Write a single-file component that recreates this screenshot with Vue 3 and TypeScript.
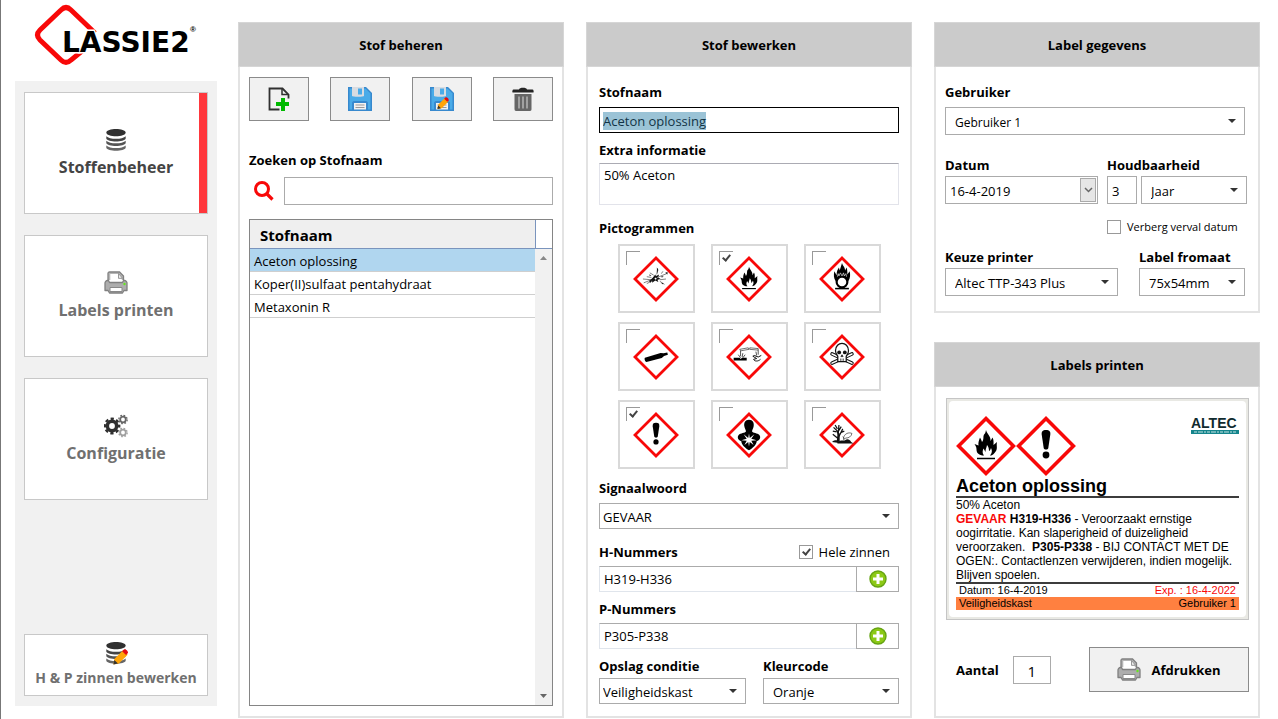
<script setup lang="ts">
import { onMounted, ref } from 'vue'

interface NavItem {
  id: string
  label: string
  icon: string
}

interface Pictogram {
  id: string
  label: string
  checked: boolean
}

const navItems: NavItem[] = [
  { id: 'stoffen', label: 'Stoffenbeheer', icon: 'i-database' },
  { id: 'labels', label: 'Labels printen', icon: 'i-printer' },
  { id: 'config', label: 'Configuratie', icon: 'i-gears' },
]
const activeNav = ref('stoffen')

const tools = [
  { label: 'Nieuwe stof', icon: 'i-new' },
  { label: 'Opslaan', icon: 'i-save' },
  { label: 'Opslaan als', icon: 'i-save-edit' },
  { label: 'Verwijderen', icon: 'i-trash' },
]

const search = ref('')
const substances = ['Aceton oplossing', 'Koper(II)sulfaat pentahydraat', 'Metaxonin R']
const selected = ref(0)

const name = ref('Aceton oplossing')
const info = ref('50% Aceton')
const hNumbers = ref('H319-H336')
const pNumbers = ref('P305-P338')
const fullSentences = ref(true)
const pictograms = ref<Pictogram[]>([
  { id: 'p-explosive', label: 'Explosief', checked: false },
  { id: 'p-flame', label: 'Ontvlambaar', checked: true },
  { id: 'p-oxidizer', label: 'Oxiderend', checked: false },
  { id: 'p-gas', label: 'Gas onder druk', checked: false },
  { id: 'p-corrosive', label: 'Corrosief', checked: false },
  { id: 'p-toxic', label: 'Giftig', checked: false },
  { id: 'p-harmful', label: 'Schadelijk', checked: true },
  { id: 'p-health', label: 'Gezondheidsgevaar', checked: false },
  { id: 'p-environment', label: 'Milieugevaarlijk', checked: false },
])

const date = ref('16-4-2019')
const shelfLife = ref('3')
const hideExpiry = ref(false)
const amount = ref('1')

const nameInput = ref<HTMLInputElement | null>(null)
onMounted(() => {
  nameInput.value?.focus()
  nameInput.value?.select()
})
</script>

<template>
  <div class="page">
    <svg class="defs" aria-hidden="true">
      <defs>
        <symbol id="i-database" viewBox="0 0 24 24">
          <path d="M2.3 17.5v2.2c1 4 18.4 4 19.4 0v-2.2c-3 3.4-16.4 3.4-19.4 0z" fill="#666" />
          <path d="M2.3 12.8V15c1 4 18.4 4 19.4 0v-2.2c-3 3.4-16.4 3.4-19.4 0z" fill="#555" />
          <path d="M2.3 8.2v2.2c1 4 18.4 4 19.4 0V8.2c-3 3.4-16.4 3.4-19.4 0z" fill="#444" />
          <path d="M2.3 4.5C2.5-.2 21.5-.2 21.7 4.5 22 9.6 2 9.6 2.3 4.5z" fill="#303030" />
        </symbol>
        <symbol id="i-pencil" viewBox="0 0 24 24">
          <path d="M7 24l1-6 9.5-9.5 5 4.8L13 23z" fill="#ffa408" />
          <path d="M7 24l1-5 4 4z" fill="#333" />
          <path d="M16.5 9.5l2-2c1.5-1 5 2 4.3 4l-2 2.2z" fill="#e30b13" />
        </symbol>
        <symbol id="i-printer" viewBox="0 0 24 24">
          <path d="M4 9V2.5C4 1.5 4.5 1 5.5 1h10l4 4v4" fill="#b5b5b5" stroke="#808080" stroke-width="1.3" />
          <path d="M6.3 12V3h8v4.500h3.500V12z" fill="#fff" />
          <path d="M14.5 2.5v4.800h4z" fill="#eee" stroke="#888" stroke-width=".8" />
          <path d="M1 12c0-1 1-2.5 2.5-2.5h1l1 2h13l1-2h1c1.5 0 2.5 1.5 2.5 2.5v7.5h-3l-1.500 2.5h-13L4 19.500H1z" fill="#adadad" stroke="#808080" stroke-width="1.3" stroke-linejoin="round" />
          <path d="M6 16.500h12v4H6z" fill="#fff" stroke="#888" />
          <circle cx="20.5" cy="13" r="1.2" fill="#65e51d" />
        </symbol>
        <symbol id="i-gears" viewBox="0 0 24 24">
          <circle cx="8" cy="12" r="4.7" fill="none" stroke="#303030" stroke-width="3.6" />
          <circle cx="8" cy="12" r="7.2" fill="none" stroke="#303030" stroke-width="2.4" stroke-dasharray="3.2 2.455" stroke-dashoffset="1.6" />
          <circle cx="19" cy="5.5" r="2.8" fill="none" stroke="#666" stroke-width="1.8" />
          <circle cx="19" cy="5.5" r="4.2" fill="none" stroke="#666" stroke-width="1.3" stroke-dasharray="1.7 1.6" />
          <circle cx="19" cy="18.5" r="2.8" fill="none" stroke="#a0a0a0" stroke-width="1.8" />
          <circle cx="19" cy="18.5" r="4.2" fill="none" stroke="#a0a0a0" stroke-width="1.3" stroke-dasharray="1.7 1.6" />
        </symbol>
        <symbol id="i-new" viewBox="0 0 24 24">
          <path d="M12.5 22.5h-10V1.5h13l6 6v4" fill="none" stroke="#303030" stroke-width="1.8" />
          <path d="M15 1.5v6h6" fill="none" stroke="#303030" stroke-width="1.5" />
          <path d="M14 11h4v4h4v4h-4v5h-4v-5H9v-4h5z" fill="#00b900" />
        </symbol>
        <symbol id="i-save" viewBox="0 0 24 24">
          <path d="M0 0h18l6 6v18H0z" fill="#3789ce" />
          <path d="M1.5 1.5h16l5 5v16h-21z" fill="#4aabe8" />
          <path d="M4 0h12v9c0 1-12 1-12 0z" fill="#d9dce1" />
          <path d="M10 1.5h4v6h-4z" fill="#4aabe8" />
          <path d="M4 24v-8c0-1 1-2 2-2h12c1 0 2 1 2 2v8z" fill="#3789ce" />
          <path d="M6 16h12v6.500H6z" fill="#f2f2f2" />
          <path d="M7.5 18h9M7.5 20.5h9" stroke="#999" />
        </symbol>
        <symbol id="i-save-edit" viewBox="0 0 24 24">
          <use href="#i-save" width="24" height="24" />
          <use href="#i-pencil" x="2" y="5" width="18" height="17" />
        </symbol>
        <symbol id="i-trash" viewBox="0 0 24 24">
          <path d="M8 2.500C8 0 16 0 16 2.500h5.500c1 0 1.500 2 1 3h-21c-.5-1 0-3 1-3z" fill="#252525" />
          <path d="M3.500 7h17v15c0 1-.5 2-1.500 2H5c-1 0-1.500-1-1.500-2z" fill="#666" />
          <path d="M8 9.500v12M12 9.500v12M16 9.500v12" stroke="#b5b5b5" stroke-width="1.5" />
        </symbol>
        <symbol id="i-add" viewBox="0 0 18 18">
          <circle cx="9" cy="9" r="8" fill="#8cc915" stroke="#65a313" stroke-width="1.4" />
          <path d="M7.500 4h3v3.500H14v3h-3.500V14h-3v-3.500H4v-3h3.500z" fill="#fff" />
        </symbol>

        <symbol id="p-frame" viewBox="0 0 60 60">
          <path d="M30 2.600L57.400 30 30 57.400 2.600 30z" fill="#fff" stroke="#f80808" stroke-width="3.6" />
        </symbol>
        <symbol id="p-explosive" viewBox="0 0 60 60">
          <g fill="none" stroke="#333" stroke-width=".8">
            <path d="M14 35l10-4M18 36l8-4M13 30l11 1M34 27l10-4M35 31l8-1M35 33l6 4M31 24l1-8M27 25l-5-3M24 28l-6-1M37 23l2-3" />
          </g>
          <path d="M26 28l3-4 1 2 4-2-1 4 3 2-4 1 1 3-4-2-4 3v-3l-4 1 3-3z" fill="#111" />
          <path d="M31 15l2 3-1 5zM42 22l3-1v3zM37 35l3 1-2 1zM21 24l3 1-2 1zM36 27l4-1-2 2zM21 33l4-2-2 4z" fill="#111" />
          <path d="M28 29l2-1 1 2-2 1zM32 27l1 1-1 1z" fill="#fff" />
        </symbol>
        <symbol id="p-flame" viewBox="0 0 60 60">
          <path d="M30 14C31 18 35 20 34.500 25L36.500 21.500C38 24 37.500 27 37.500 29L41 26C40 30 42.500 33 38.500 37 37 39 35.500 39.500 34 39.500 36 37 36.500 35 35 32 34.500 34 33.500 35 33 35 33 32 32 30 31 29 30.500 32 29.500 33 29.500 36L27.500 32.500C26.500 35 26 37 28 39.500 23 39.500 20.500 37 20.500 33.500 20.500 31 19.500 30 18.500 28L22.500 29.500C22 27 23 24 24 21.500 25 23 25.500 24.500 26 26 28.500 23 26.500 20 28.500 18 29.500 17 29.700 15.500 30 14z" fill="#000" />
          <path d="M21 42.500h18" stroke="#000" stroke-width="1.5" />
        </symbol>
        <symbol id="p-oxidizer" viewBox="0 0 60 60">
          <path d="M22 33c-3-4-3-8-2-13l3 5c0-5 1-7 3-10l1 4 3-10c1 4 4 5 4 10l2-4c1 3 1 6 1 9l3-4c1 5 1 9-2 13z" fill="#000" />
          <circle cx="30" cy="34" r="7" fill="#fff" stroke="#000" stroke-width="2.8" />
          <path d="M24 27l1-4 1 3 2-4 2 4 2-4 1 4 2-3 1 4" fill="none" stroke="#fff" stroke-width=".8" />
          <path d="M21 42.500h18" stroke="#000" stroke-width="2" />
        </symbol>
        <symbol id="p-gas" viewBox="0 0 60 60">
          <path d="M15.500 31c-1 1 0 5 2 5.500l20-5.300 3-2.500 5-1.500-.8-3-4.700 1-4-.5z" fill="#000" />
        </symbol>
        <symbol id="p-corrosive" viewBox="0 0 60 60">
          <path d="M18 20l11-2 1 2-11 2zM31 18l11 1v2l-11-1z" fill="#fff" stroke="#333" stroke-width=".9" />
          <path d="M19 22v7M22 25l-1 5M42 21v6M39 23l1 5M16 27l3 4M25 27l-3 4" fill="none" stroke="#222" stroke-width="1" />
          <path d="M10 31h8l1 1.500 2-1.500h6v3.500H10z" fill="#000" />
          <path d="M46 28l-4 2-5-2-2 1 5 3-4 1c1 3 6 3 9 0" fill="none" stroke="#111" stroke-width="1.3" />
        </symbol>
        <symbol id="p-toxic" viewBox="0 0 60 60">
          <path d="M17 26l26 12M43 26L17 38" stroke="#111" stroke-width="4.600" stroke-linecap="round" />
          <path d="M17 26l26 12M43 26L17 38" stroke="#fff" stroke-width="2" stroke-linecap="round" />
          <path d="M21.500 22c0-13 17-13 17 0 0 4-1 5-3 7v7h-11v-7c-2-2-3-3-3-7z" fill="#fff" stroke="#111" stroke-width="1.6" />
          <ellipse cx="26.3" cy="24" rx="2.5" ry="2.4" fill="#111" />
          <ellipse cx="33.7" cy="24" rx="2.5" ry="2.4" fill="#111" />
          <path d="M30 27l1.500 2.500h-3zM28 32v3M30 32v3M32 32v3" fill="#111" stroke="#111" stroke-width=".8" />
        </symbol>
        <symbol id="p-harmful" viewBox="0 0 60 60">
          <path d="M30 14c3.500 0 4.600 1.500 4.300 4.500l-2 13.500c-.5 2-4.100 2-4.600 0l-2-13.500C25.400 15.500 26.500 14 30 14z" fill="#000" />
          <circle cx="30" cy="39" r="3.4" fill="#000" />
        </symbol>
        <symbol id="p-health" viewBox="0 0 60 60">
          <path d="M30 10c5 0 7 4 6 9-.5 3-2 4-2 6.500 1 2 7 2 9.500 4.500C46 33 44 37 40 38c0 4-5 9-10 12-5-3-10-8-10-12-4-1-6-5-3.500-8 2.500-2.500 8.500-2.500 9.500-4.500 0-2.500-1.500-3.500-2-6.500-1-5 1-9 6-9z" fill="#000" />
          <path d="M30 28l1 6 6-5-4 6 7 2-7 .5 3 5.500-5-4-1 6-1-6-5 4 3-5.500-7-.5 7-2-4-6 6 5z" fill="#fff" />
        </symbol>
        <symbol id="p-environment" viewBox="0 0 60 60">
          <path d="M24 39l1-8-1-6-5-5M25 30l1-13M26 32l5-10M23 26l-5-1M28 27l5-2M24 22l-3-5M26 24l3-5M24 34l-6-5" fill="none" stroke="#111" stroke-width="1.6" />
          <path d="M25 27l2 1v10h-4z" fill="#111" />
          <path d="M17 39c4-3 7-2 9-1 3-2 5 0 8-1 3-3 6-1 8 2l3 2H24v-1z" fill="#111" />
          <path d="M32 34c1-6 7-8 11-6-1 4-4 6-8 6l-3 2zM33 35l-2-3" fill="#fff" stroke="#333" stroke-width=".9" />
        </symbol>
      </defs>
    </svg>

    <aside class="sidebar">
      <svg class="logo" width="170" height="64" viewBox="0 0 170 64" role="img" aria-label="LASSIE2">
        <path d="M59 28L35 5Q30 0 25 5L4 25Q-1 30 4 35L25 55Q30 60 35 55L46 46" fill="none" stroke="#f80808" stroke-width="5" />
        <text x="26" y="47" class="logo-text">LASSIE2</text>
        <text x="154" y="27" class="logo-mark">®</text>
      </svg>
      <nav class="nav">
        <button
          v-for="item in navItems"
          :key="item.id"
          type="button"
          class="nav-item"
          :class="{ active: activeNav === item.id }"
          @click="activeNav = item.id"
        >
          <svg width="24" height="24"><use :href="'#' + item.icon" /></svg>
          <span>{{ item.label }}</span>
        </button>
        <button type="button" class="nav-item small">
          <svg width="26" height="24" viewBox="0 0 26 24">
            <use href="#i-database" x="1" width="24" height="24" />
            <use href="#i-pencil" x="4" y="1" width="22" height="23" />
          </svg>
          <span>H &amp; P zinnen bewerken</span>
        </button>
      </nav>
    </aside>

    <main class="panels">
      <section class="panel">
        <h2>Stof beheren</h2>
        <div class="body manage">
          <div class="tools">
            <button v-for="tool in tools" :key="tool.icon" type="button" class="tool" :aria-label="tool.label">
              <svg width="24" height="24"><use :href="'#' + tool.icon" /></svg>
            </button>
          </div>
          <label for="search" class="caption">Zoeken op Stofnaam</label>
          <div class="search">
            <svg width="20" height="20" viewBox="0 0 20 20" aria-hidden="true">
              <circle cx="8" cy="8" r="6.500" fill="none" stroke="#f80808" stroke-width="3" />
              <path d="M12.500 12.500l6 6" stroke="#f80808" stroke-width="3.2" />
            </svg>
            <input id="search" v-model="search" type="text" class="box tall" />
          </div>
          <div class="list">
            <table>
              <thead>
                <tr><th scope="col">Stofnaam</th></tr>
              </thead>
              <tbody>
                <tr v-for="(row, i) in substances" :key="row" :class="{ selected: selected === i }" @click="selected = i">
                  <td>{{ row }}</td>
                </tr>
              </tbody>
            </table>
            <div class="scroll" aria-hidden="true">
              <div class="scroll-head"></div>
              <div class="track">
                <svg width="7" height="4"><path d="M0 4l3.500-4L7 4z" fill="#888" /></svg>
                <svg width="7" height="4"><path d="M0 0l3.500 4L7 0z" fill="#666" /></svg>
              </div>
            </div>
          </div>
        </div>
      </section>

      <section class="panel">
        <h2>Stof bewerken</h2>
        <div class="body edit">
          <label for="name" class="caption">Stofnaam</label>
          <input id="name" ref="nameInput" v-model="name" type="text" class="box name" />
          <label for="info" class="caption gap-s">Extra informatie</label>
          <textarea id="info" v-model="info" class="box info"></textarea>
          <div class="caption gap-l">Pictogrammen</div>
          <div class="pictograms">
            <label v-for="p in pictograms" :key="p.id" class="pictogram">
              <input v-model="p.checked" type="checkbox" class="corner" :aria-label="p.label" />
              <svg width="46" height="46" viewBox="0 0 60 60" aria-hidden="true">
                <use href="#p-frame" />
                <use :href="'#' + p.id" />
              </svg>
            </label>
          </div>
          <label for="signal" class="caption">Signaalwoord</label>
          <div class="select">
            <select id="signal" class="box tight"><option>GEVAAR</option><option>WAARSCHUWING</option></select>
          </div>
          <div class="between gap-l">
            <label for="hnum" class="caption">H-Nummers</label>
            <label class="check"><input v-model="fullSentences" type="checkbox" />Hele zinnen</label>
          </div>
          <div class="adder">
            <input id="hnum" v-model="hNumbers" type="text" class="box soft" />
            <button type="button" aria-label="H-nummer toevoegen"><svg width="18" height="18"><use href="#i-add" /></svg></button>
          </div>
          <label for="pnum" class="caption gap-s">P-Nummers</label>
          <div class="adder">
            <input id="pnum" v-model="pNumbers" type="text" class="box soft" />
            <button type="button" aria-label="P-nummer toevoegen"><svg width="18" height="18"><use href="#i-add" /></svg></button>
          </div>
          <div class="storage gap-s">
            <div>
              <label for="storage" class="caption">Opslag conditie</label>
              <div class="select"><select id="storage" class="box tight"><option>Veiligheidskast</option></select></div>
            </div>
            <div>
              <label for="colour" class="caption">Kleurcode</label>
              <div class="select"><select id="colour" class="box"><option>Oranje</option></select></div>
            </div>
          </div>
        </div>
      </section>

      <div class="column">
        <section class="panel">
          <h2>Label gegevens</h2>
          <div class="body details">
            <label for="user" class="caption">Gebruiker</label>
            <div class="select"><select id="user" class="box tall user"><option>Gebruiker 1</option></select></div>
            <div class="dates">
              <div class="grow">
                <label for="date" class="caption">Datum</label>
                <div class="date box tall">
                  <input id="date" v-model="date" type="text" />
                  <button type="button" aria-label="Kalender openen">
                    <svg width="9" height="6" viewBox="0 0 9 6"><path d="M1 1l3.500 3.500L8 1" fill="none" stroke="#666" stroke-width="1.5" /></svg>
                  </button>
                </div>
              </div>
              <div class="shelf">
                <label for="shelf" class="caption">Houdbaarheid</label>
                <div class="shelf-row">
                  <input id="shelf" v-model="shelfLife" type="text" class="box tall count" />
                  <div class="select"><select class="box tall" aria-label="Eenheid"><option>Jaar</option><option>Maand</option></select></div>
                </div>
              </div>
            </div>
            <label class="check hide"><input v-model="hideExpiry" type="checkbox" />Verberg verval datum</label>
            <div class="printer">
              <div class="grow">
                <label for="printer" class="caption">Keuze printer</label>
                <div class="select"><select id="printer" class="box tall"><option>Altec TTP-343 Plus</option></select></div>
              </div>
              <div class="format">
                <label for="format" class="caption">Label fromaat</label>
                <div class="select"><select id="format" class="box tall"><option>75x54mm</option></select></div>
              </div>
            </div>
          </div>
        </section>

        <section class="panel fill">
          <h2>Labels printen</h2>
          <div class="body print">
            <div class="preview">
              <article class="sticker">
                <div class="sticker-top">
                  <div class="signs">
                    <svg width="60" height="60" viewBox="0 0 60 60"><use href="#p-frame" /><use href="#p-flame" /></svg>
                    <svg width="60" height="60" viewBox="0 0 60 60"><use href="#p-frame" /><use href="#p-harmful" /></svg>
                  </div>
                  <svg width="48" height="20" viewBox="0 0 48 20" role="img" aria-label="ALTEC">
                    <text x="0" y="12" class="altec">ALTEC</text>
                    <path d="M0 14h48v4H0z" fill="#15858c" />
                    <path d="M3 16h42" stroke="#c8e4e4" stroke-dasharray="3 1 5 1 2 1" />
                  </svg>
                </div>
                <h3>Aceton oplossing</h3>
                <p>
                  50% Aceton<br />
                  <b class="danger">GEVAAR</b> <b>H319-H336</b> - Veroorzaakt ernstige oogirritatie. Kan slaperigheid of
                  duizeligheid veroorzaken.&nbsp; <b>P305-P338</b> - BIJ CONTACT MET DE OGEN:. Contactlenzen
                  verwijderen, indien mogelijk. Blijven spoelen.
                </p>
                <div class="sticker-row"><span>Datum: 16-4-2019</span><span class="danger">Exp. : 16-4-2022</span></div>
                <div class="sticker-row orange"><span>Veiligheidskast</span><span>Gebruiker 1</span></div>
              </article>
            </div>
            <div class="print-row">
              <label for="amount" class="caption">Aantal</label>
              <input id="amount" v-model="amount" type="text" class="box tall amount" />
              <button type="button" class="print-button">
                <svg width="24" height="24"><use href="#i-printer" /></svg>
                Afdrukken
              </button>
            </div>
          </div>
        </section>
      </div>
    </main>
  </div>
</template>

<style>
body {
  margin: 0;
  background: #fff;
}
</style>

<style scoped>
* {
  box-sizing: border-box;
}
.page {
  display: flex;
  gap: 21px;
  min-height: 100vh;
  padding: 0 18px 0 14px;
  border-left: 1px solid #777;
  font-family: 'Open Sans', 'Noto Sans', sans-serif;
  font-size: 13px;
  color: #000;
}
.defs {
  position: absolute;
  width: 0;
  height: 0;
}
svg {
  display: block;
  flex: none;
}
button,
input,
select,
textarea {
  font: inherit;
  color: inherit;
  margin: 0;
  outline: none;
}
button {
  padding: 0;
  cursor: pointer;
}

/* Sidebar */
.sidebar {
  display: flex;
  flex-direction: column;
  flex: none;
  width: 202px;
  padding: 5px 0 13px;
}
.logo {
  margin: 0 0 12px 21px;
  overflow: visible;
}
.logo-text {
  font: bold 28px 'DejaVu Sans', sans-serif;
  stroke: #fff;
  stroke-width: 3px;
  paint-order: stroke;
}
.logo-mark {
  font: bold 8px 'Liberation Sans', sans-serif;
}
.nav {
  display: flex;
  flex-direction: column;
  flex: 1;
  gap: 21px;
  padding: 11px 9px 10px;
  background: #f1f1f1;
}
.nav-item {
  position: relative;
  display: flex;
  flex-direction: column;
  align-items: center;
  justify-content: center;
  gap: 3px;
  height: 122px;
  border: 1px solid #c8c8c8;
  background: #fff;
  color: #707070;
  font-size: 16px;
  font-weight: 700;
  line-height: 24px;
}
.nav-item.active {
  color: #444;
}
.nav-item.active::after {
  content: '';
  position: absolute;
  inset: 0 0 0 auto;
  width: 8px;
  background: #ff373c;
}
.nav-item.small {
  gap: 1px;
  height: 62px;
  margin-top: auto;
  font-size: 14px;
}

/* Panels */
.panels {
  display: grid;
  grid-template-columns: repeat(3, minmax(0, 1fr));
  gap: 22px;
  flex: 1;
  padding: 22px 0 1px;
}
.column {
  display: flex;
  flex-direction: column;
  gap: 29px;
}
.panel {
  display: flex;
  flex-direction: column;
  border: 2px solid #e3e3e3;
}
.fill {
  flex: 1;
}
h2 {
  margin: -2px -2px 0;
  padding-top: 2px;
  border: 1px solid #d6d6d6;
  background: #cbcbcb;
  font-size: 13px;
  font-weight: 700;
  line-height: 41px;
  text-align: center;
}
.body {
  display: flex;
  flex-direction: column;
  flex: 1;
}
.caption {
  display: block;
  font-weight: 700;
  line-height: 18px;
}
.box {
  width: 100%;
  height: 26px;
  padding: 2px 4px 0;
  border: 1px solid #ababab;
  border-radius: 0;
  background: #fff;
}
.tall {
  height: 28px;
}
.gap-s {
  margin-top: 8px;
}
.gap-l {
  margin-top: 14px;
}
.between {
  display: flex;
  justify-content: space-between;
  padding-right: 9px;
}
.select {
  position: relative;
  flex: 1;
}
.select select {
  appearance: none;
  display: block;
  padding: 2px 24px 0 9px;
}
.select select.tight {
  padding-left: 3px;
}
.select select.user {
  font-size: 12px;
}
.select::after {
  content: '';
  position: absolute;
  right: 9px;
  top: 50%;
  margin-top: -2px;
  border: 4px solid transparent;
  border-top-color: #333;
  border-bottom: 0;
  pointer-events: none;
}
.check {
  display: flex;
  align-items: center;
  gap: 6px;
  line-height: 18px;
}
input[type='checkbox'] {
  appearance: none;
  position: relative;
  flex: none;
  width: 14px;
  height: 14px;
  border: 1px solid #999;
  background: #fff;
}
input[type='checkbox']:checked::after {
  content: '';
  position: absolute;
  left: 4px;
  top: 1px;
  width: 3px;
  height: 6px;
  border: solid #444;
  border-width: 0 2px 2px 0;
  transform: rotate(40deg);
}

/* Substance list */
.manage {
  padding: 10px 9px;
}
.tools {
  display: flex;
  justify-content: space-between;
  margin-bottom: 30px;
}
.tool {
  display: flex;
  align-items: center;
  justify-content: center;
  width: 60px;
  height: 44px;
  border: 1px solid #8b8b8b;
  background: #f1f1f1;
}
.search {
  display: flex;
  align-items: center;
  gap: 10px;
  margin: 8px 0 14px;
  padding-left: 5px;
}
.list {
  display: flex;
  flex: 1;
  border: 1px solid #858585;
}
table {
  flex: 1;
  align-self: flex-start;
  border-collapse: separate;
  border-spacing: 0;
}
th {
  height: 29px;
  padding: 2px 10px 0;
  border-bottom: 1px solid #7a94bd;
  background: #efefef;
  font-size: 15px;
  line-height: 20px;
  text-align: left;
}
td {
  height: 23px;
  padding: 2px 4px 0;
  border-bottom: 1px solid #cfcfcf;
  line-height: 18px;
}
.selected td {
  background: #b0d6ef;
}
.scroll {
  display: flex;
  flex-direction: column;
  width: 17px;
}
.scroll-head {
  height: 29px;
  border: solid #7a94bd;
  border-width: 0 0 1px 1px;
}
.track {
  display: flex;
  flex-direction: column;
  align-items: center;
  justify-content: space-between;
  flex: 1;
  padding: 7px 0;
  background: #f1f1f1;
}

/* Substance editor */
.edit {
  padding: 16px 11px 12px;
}
.name {
  margin-top: 6px;
  padding: 2px 3px 0;
  border-color: #000;
}
.name::selection {
  background: #9bc3d6;
  color: #123446;
}
.info {
  height: 42px;
  margin-top: 4px;
  padding: 2px 4px;
  border-color: #ababb3 #e2e3ea #e2e3ea;
  line-height: 18px;
  resize: none;
}
.pictograms {
  display: grid;
  grid-template-columns: repeat(3, 77px);
  justify-content: center;
  gap: 9px 16px;
  margin: 7px 0 10px;
}
.pictogram {
  position: relative;
  display: flex;
  align-items: center;
  justify-content: center;
  height: 69px;
  border: 2px solid #d9d9d9;
}
.pictogram input.corner {
  position: absolute;
  left: 6px;
  top: 5px;
  border-width: 1px 0 0 1px;
}
.edit > .select {
  flex: none;
  margin-top: 6px;
}
.adder {
  display: flex;
  margin-top: 5px;
}
.adder button {
  display: flex;
  align-items: center;
  justify-content: center;
  flex: none;
  width: 43px;
  border: 1px solid #ababab;
  background: #fff;
}
.soft {
  padding: 0 4px;
  border-color: #ababab #ababab #e0e5ec #e0e5ec;
  border-right: 0;
}
.storage {
  display: flex;
  gap: 17px;
}
.storage > div {
  flex: 147;
  min-width: 0;
}
.storage > div + div {
  flex: 136;
}
.storage .select {
  margin-top: 3px;
}

/* Label details */
.details {
  padding: 16px 13px 15px 9px;
}
.details > .select {
  margin-top: 6px;
}
.dates,
.printer {
  display: flex;
}
.dates {
  gap: 9px;
  margin: 21px -2px 0 0;
}
.dates .caption,
.printer .caption {
  margin-bottom: 2px;
}
.grow {
  flex: 1;
  min-width: 0;
}
.shelf {
  width: 140px;
}
.shelf-row {
  display: flex;
  gap: 4px;
}
.count {
  flex: none;
  width: 30px;
}
.date {
  display: flex;
  align-items: stretch;
  padding: 1px 1px 1px 4px;
}
.date input {
  flex: 1;
  min-width: 0;
  padding: 1px 0 0;
  border: 0;
}
.date button {
  display: flex;
  align-items: center;
  justify-content: center;
  width: 16px;
  border: 1px solid #aaa;
  background: #e6e6e6;
}
.hide {
  align-self: flex-end;
  width: 138px;
  margin-top: 14px;
  font-size: 11px;
  white-space: nowrap;
}
.printer {
  gap: 21px;
  margin-top: 12px;
}
.format {
  width: 106px;
}

/* Label preview */
.print {
  padding: 11px 9px 24px 10px;
}
.preview {
  padding: 2px;
  border: 1px solid #c5c5c5;
  background: #e9e9e4;
}
.sticker {
  padding: 15px 7px 7px;
  border-radius: 4px;
  background: #fff;
  font-family: 'Liberation Sans', Arial, sans-serif;
}
.sticker-top {
  display: flex;
  justify-content: space-between;
}
.signs {
  display: flex;
}
.altec {
  font: bold 14px 'Liberation Sans', sans-serif;
  fill: #102a2e;
}
h3 {
  margin: 0;
  border-bottom: 2px solid #3c3c3c;
  font-size: 18px;
  line-height: 20px;
}
.sticker p {
  margin: 0;
  border-bottom: 2px solid #3c3c3c;
  font-size: 12px;
  line-height: 14px;
}
.danger {
  color: #f80808;
}
.sticker-row {
  display: flex;
  justify-content: space-between;
  padding: 0 3px;
  font-size: 11px;
  line-height: 13px;
}
.orange {
  background: #ff8040;
}
.print-row {
  display: flex;
  align-items: center;
  margin-top: auto;
  padding-left: 10px;
}
.amount {
  width: 38px;
  margin-left: 14px;
  font-size: 15px;
  text-align: center;
}
.print-button {
  display: flex;
  align-items: center;
  justify-content: center;
  gap: 10px;
  width: 160px;
  height: 45px;
  margin-left: auto;
  border: 1px solid #8b8b8b;
  background: #f1f1f1;
  font-weight: 700;
}
</style>
